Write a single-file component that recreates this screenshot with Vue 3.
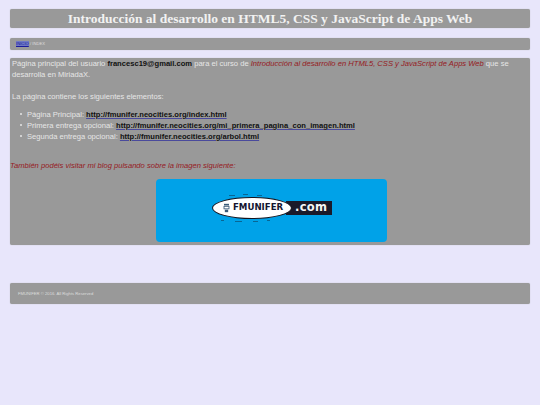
<script setup>
const links = [
  { label: 'Página Principal:', url: 'http://fmunifer.neocities.org/index.html' },
  { label: 'Primera entrega opcional:', url: 'http://fmunifer.neocities.org/mi_primera_pagina_con_imagen.html' },
  { label: 'Segunda entrega opcional:', url: 'http://fmunifer.neocities.org/arbol.html' },
]
</script>

<template>
  <div class="page">
    <header class="box header">Introducción al desarrollo en HTML5, CSS y JavaScript de Apps Web</header>

    <nav class="box nav">
      <a href="#" class="nav-link">INICIO</a>
      <span> / INDEX</span>
    </nav>

    <main class="box main">
      <p class="intro">
        Página principal del usuario <strong class="dark">francesc19@gmail.com</strong> para el curso de
        <em class="red">Introducción al desarrollo en HTML5, CSS y JavaScript de Apps Web</em> que se desarrolla en MiriadaX.
      </p>
      <p class="contains">La página contiene los siguientes elementos:</p>
      <ul class="list">
        <li v-for="item in links" :key="item.url">
          {{ item.label }} <a href="#" class="url">{{ item.url }}</a>
        </li>
      </ul>
      <p class="blog red">También podéis visitar mi blog pulsando sobre la imagen siguiente:</p>
      <div class="banner-row">
        <div class="banner">
          <div class="logo">
            <svg class="specks" viewBox="0 0 86 30" width="86" height="30">
              <path d="M20 2.5h6M34 1.5h5M48 2.5h5M12 27.5h3M26 28.5h7M44 28.5h5M58 27.5h3" stroke="#14141f" stroke-width="0.6" opacity="0.7" fill="none" />
            </svg>
            <div class="oval">
              <svg class="face" viewBox="0 0 8 12" width="7" height="10">
                <rect x="1" y="1" width="6" height="2" fill="#3a5a78" />
                <rect x="1" y="4" width="6" height="3" fill="none" stroke="#3a5a78" />
                <rect x="2" y="8" width="4" height="3" fill="#3a5a78" />
              </svg>
              <span class="logo-name">FMUNIFER</span>
            </div>
            <span class="logo-com">.com</span>
          </div>
        </div>
      </div>
    </main>

    <footer class="box footer">FMUNIFER © 2016. All Rights Reserved</footer>
  </div>
</template>

<style>
html, body {
  margin: 0;
  background: #e8e6fb;
}
</style>

<style scoped>
.page {
  box-sizing: border-box;
  height: 405px;
  padding: 9px 10px 0;
  background: #e8e6fb;
  font-family: "Liberation Sans", Arial, sans-serif;
  color: #e6e6e6;
}

.box {
  box-sizing: border-box;
  background: #999999;
  border-radius: 2px;
  box-shadow: 0 0 1px #aaa;
}

.header {
  height: 19px;
  line-height: 19px;
  text-align: center;
  font-family: "Liberation Serif", "Times New Roman", serif;
  font-size: 13.5px;
  font-weight: 700;
  color: #f2f2f2;
}

.nav {
  height: 12px;
  line-height: 12px;
  margin-top: 10px;
  padding-left: 6px;
  font-size: 4.2px;
  color: #ddd;
}

.nav-link {
  color: #1a1a9c;
  background: #6f78c4;
}

.main {
  height: 187px;
  margin-top: 8px;
  font-size: 7.6px;
  line-height: 11px;
}

p {
  margin: 0;
}

.intro {
  padding: 0 2px;
}

.dark {
  color: #111;
}

.red {
  color: #96191f;
}

.contains {
  margin: 11px 0 0 2px;
}

.list {
  margin: 7px 0 0;
  padding: 0 0 0 10px;
  list-style: none;
}

.list li::before {
  content: "";
  display: inline-block;
  width: 2px;
  height: 2px;
  margin-right: 5px;
  vertical-align: 2px;
  border-radius: 50%;
  background: #e6e6e6;
}

.url {
  color: #111;
  font-weight: 700;
  text-decoration-color: #4a4a9c;
}

.blog {
  margin-top: 18px;
  font-style: italic;
}

.banner-row {
  display: flex;
  justify-content: center;
  margin-top: 8px;
  padding-left: 2px;
}

.banner {
  display: flex;
  justify-content: center;
  align-items: center;
  width: 231px;
  height: 63px;
  padding-bottom: 6px;
  box-sizing: border-box;
  background: #00a2e8;
  border-radius: 4px;
}

.logo {
  display: flex;
  align-items: center;
  position: relative;
  margin-left: 2px;
}

.specks {
  position: absolute;
  left: -3px;
  top: -4px;
}

.oval {
  display: flex;
  align-items: center;
  gap: 3px;
  width: 80px;
  height: 22px;
  padding-left: 10px;
  background: #fff;
  border: 1px solid #14141f;
  border-radius: 50%;
  box-sizing: border-box;
  position: relative;
  z-index: 1;
}

.logo-name {
  font-family: "DejaVu Sans", sans-serif;
  font-size: 8.6px;
  font-weight: 700;
  color: #151530;
}

.logo-com {
  box-sizing: border-box;
  width: 46px;
  margin-left: -6px;
  padding-left: 9px;
  height: 14px;
  line-height: 13px;
  background: #1a1a2a;
  font-family: "DejaVu Sans", sans-serif;
  font-size: 11.5px;
  font-weight: 700;
  letter-spacing: 0.3px;
  color: #f4f4f4;
}

.footer {
  height: 21px;
  line-height: 21px;
  margin-top: 38px;
  padding-left: 8px;
  font-size: 4.2px;
  color: #ddd;
}
</style>
